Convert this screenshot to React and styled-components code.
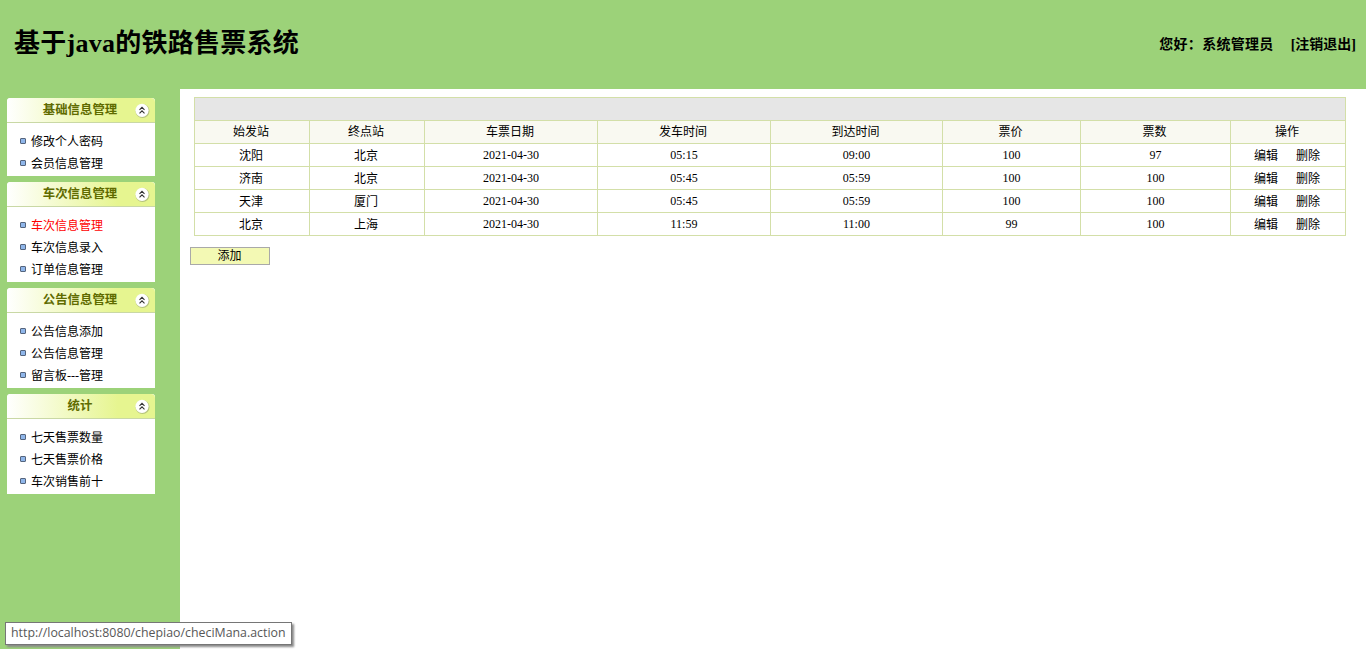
import React from "react";
import styled, { createGlobalStyle } from "styled-components";

const Global = createGlobalStyle`
  html, body { margin: 0; padding: 0; height: 100%; background: #fff; overflow: hidden; }
  body { font-family: "Liberation Serif", "Noto Sans CJK SC", serif; font-size: 12px; color: #000; }
`;

const Page = styled.div`
  position: relative;
  width: 1366px;
  height: 649px;
  display: grid;
  grid-template-rows: 89px 1fr;
  grid-template-columns: 180px 1fr;
`;
const Header = styled.header`
  grid-column: 1 / 3;
  background: #9cd279;
  display: flex;
  align-items: flex-start;
  justify-content: space-between;
  padding: 0 10px 0 14px;
`;
const Title = styled.h1`
  margin: 26px 0 0;
  font-size: 26px;
  line-height: 36px;
  font-weight: bold;
  font-family: "Liberation Serif", "Noto Sans CJK SC", serif;
  letter-spacing: 0.25px;
`;
const UserBox = styled.div`
  margin-top: 36px;
  display: flex;
  gap: 17px;
  font-size: 14px;
  line-height: 18px;
  font-weight: bold;
`;
const Greeting = styled.span`
  letter-spacing: 0.3px;
`;
const Sidebar = styled.aside`
  background: #9cd279;
  padding: 9px 25px 0 7px;
  display: flex;
  flex-direction: column;
  gap: 6px;
`;
const Panel = styled.section`
  background: #fff;
  width: 148px;
  border-radius: 3px 3px 0 0;
`;
const PanelHead = styled.div`
  position: relative;
  height: 24px;
  border-bottom: 1px solid #c9d8a5;
  border-radius: 4px 4px 0 0;
  background: linear-gradient(to right, #ffffff 0%, #e6f590 75%, #e6f590 100%);
  color: #5f6b00;
  font-weight: bold;
  font-size: 12.4px;
  line-height: 24px;
  text-align: center;
  padding-right: 2px;
`;
const Toggle = styled.svg`
  position: absolute;
  right: 4px;
  top: 4px;
  width: 17px;
  height: 17px;
`;
const List = styled.ul`
  list-style: none;
  margin: 0;
  padding: 7px 0 2px 13px;
`;
const Item = styled.li`
  display: flex;
  align-items: center;
  gap: 5px;
  height: 22px;
  font-size: 12px;
  color: ${(p) => (p.$active ? "#ff0000" : "#000")};
`;
const Bullet = styled.span`
  width: 4px;
  height: 4px;
  border: 1px solid #55657d;
  border-radius: 1px;
  background: #8fb6ea;
`;
const Main = styled.main`
  padding: 8px 20px 0 10px;
`;
const Table = styled.table`
  border-collapse: collapse;
  table-layout: fixed;
  width: 1152px;
  margin-left: 4px;
`;
const Caption = styled.th`
  height: 22px;
  background: #e6e6e6;
  border: 1px solid #d3dfa8;
  padding: 0;
`;
const Th = styled.th`
  box-sizing: border-box;
  height: 23px;
  background: #f9f9f1;
  border: 1px solid #d3dfa8;
  font-weight: normal;
  font-size: 12px;
  line-height: 18px;
  padding: 0 2px 0 0;
`;
const Td = styled.td`
  height: 22px;
  border: 1px solid #d3dfa8;
  text-align: center;
  font-size: 12px;
  padding: 0 ${(p) => (p.$cjk ? "2px" : "0")} 0 0;
`;
const Action = styled.span`
  & + & { margin-left: 18px; }
`;
const AddButton = styled.button`
  display: block;
  box-sizing: border-box;
  margin: 11px 0 0;
  width: 80px;
  height: 18px;
  padding: 0 1px 0 0;
  background: #f3f9b4;
  border: 1px solid #a9a9a9;
  font-family: inherit;
  font-size: 12px;
  line-height: 16px;
  color: #000;
`;
const StatusTip = styled.div`
  position: absolute;
  left: 5px;
  top: 622px;
  box-sizing: border-box;
  width: 287px;
  height: 23px;
  padding: 0 5px;
  background: #fff;
  border: 1px solid #767676;
  box-shadow: 2px 2px 2px #8a8a8a;
  font-family: "Open Sans", "Noto Sans", sans-serif;
  font-size: 12.36px;
  line-height: 20px;
  color: #575757;
  white-space: nowrap;
`;

const widths = [115, 115, 173, 173, 172, 138, 150, 115];
const heads = ["始发站", "终点站", "车票日期", "发车时间", "到达时间", "票价", "票数", "操作"];
const rows = [
  ["沈阳", "北京", "2021-04-30", "05:15", "09:00", "100", "97"],
  ["济南", "北京", "2021-04-30", "05:45", "05:59", "100", "100"],
  ["天津", "厦门", "2021-04-30", "05:45", "05:59", "100", "100"],
  ["北京", "上海", "2021-04-30", "11:59", "11:00", "99", "100"],
];
const menus = [
  { title: "基础信息管理", items: ["修改个人密码", "会员信息管理"] },
  { title: "车次信息管理", items: ["车次信息管理", "车次信息录入", "订单信息管理"], active: 0 },
  { title: "公告信息管理", items: ["公告信息添加", "公告信息管理", "留言板---管理"] },
  { title: "统计", items: ["七天售票数量", "七天售票价格", "车次销售前十"] },
];

const ToggleIcon = () => (
  <Toggle viewBox="0 0 17 17">
    <circle cx="8.5" cy="9" r="7" fill="#8e9a70" opacity="0.55" />
    <circle cx="8" cy="8.3" r="6.6" fill="#fff" />
    <path d="M5.5 7.8 8 5.3l2.5 2.5M5.5 11.3 8 8.8l2.5 2.5" fill="none" stroke="#333" strokeWidth="1.1" />
  </Toggle>
);

export default function App() {
  return (
    <Page>
      <Global />
      <Header>
        <Title>基于java的铁路售票系统</Title>
        <UserBox>
          <Greeting>您好：系统管理员</Greeting>
          <span>[注销退出]</span>
        </UserBox>
      </Header>
      <Sidebar>
        {menus.map((m) => (
          <Panel key={m.title}>
            <PanelHead>
              {m.title}
              <ToggleIcon />
            </PanelHead>
            <List>
              {m.items.map((it, i) => (
                <Item key={it} $active={m.active === i}>
                  <Bullet />
                  {it}
                </Item>
              ))}
            </List>
          </Panel>
        ))}
      </Sidebar>
      <Main>
        <Table>
          <colgroup>
            {widths.map((w, i) => (
              <col key={i} style={{ width: w }} />
            ))}
          </colgroup>
          <thead>
            <tr>
              <Caption colSpan={8} />
            </tr>
            <tr>
              {heads.map((h) => (
                <Th key={h}>{h}</Th>
              ))}
            </tr>
          </thead>
          <tbody>
            {rows.map((r, i) => (
              <tr key={i}>
                {r.map((c, j) => (
                  <Td key={j} $cjk={j < 2}>{c}</Td>
                ))}
                <Td $cjk>
                  <Action>编辑</Action>
                  <Action>删除</Action>
                </Td>
              </tr>
            ))}
          </tbody>
        </Table>
        <AddButton type="button">添加</AddButton>
      </Main>
      <StatusTip>http://localhost:8080/chepiao/checiMana.action</StatusTip>
    </Page>
  );
}
